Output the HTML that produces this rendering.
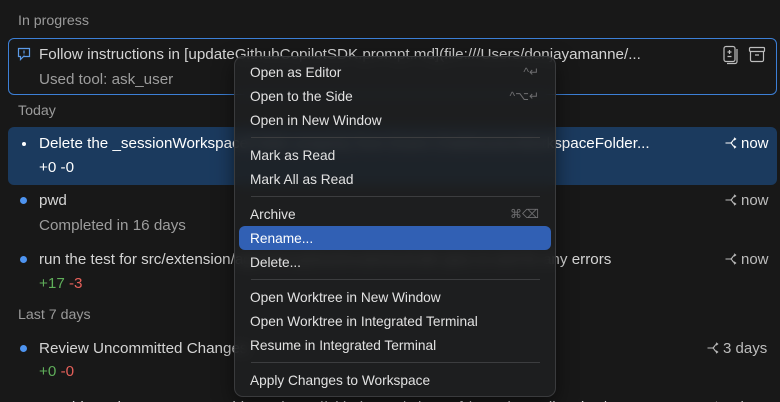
<!DOCTYPE html>
<html><head><meta charset="utf-8"><style>
*{margin:0;padding:0;box-sizing:border-box}
html,body{width:780px;height:402px;overflow:hidden}
body{background:#181818;font-family:"Liberation Sans",sans-serif;font-size:15.2px;color:#cccccc;position:relative}
.a{position:absolute;white-space:nowrap}
.h{color:#9a9a9a;font-size:14.2px}
.t{color:#d4d4d4}
.s{color:#9d9d9d}
.dot{position:absolute;width:7px;height:7px;border-radius:50%;background:#4e94f0}
.g{color:#5fae5a}.r{color:#e5605a}
.menu{position:absolute;left:234px;top:56px;width:322px;height:341px;background:rgba(30,31,33,0.86);backdrop-filter:blur(6px);-webkit-backdrop-filter:blur(6px);border:1px solid #3a3b3d;border-radius:9px;box-shadow:0 6px 20px rgba(0,0,0,.5)}
.mi{position:absolute;left:15px;font-size:13.7px;color:#e2e2e2}
.sep{position:absolute;left:16px;width:289px;height:1px;background:#3c3d3f}
.kb{position:absolute;right:16px;font-size:12px;color:#6e6e70}
.tm{position:absolute;color:#bdbdbd;font-size:15px}
.tm svg{vertical-align:-1px;margin-right:4px}
</style></head><body>
<div class="a h" style="left:18px;top:13px">In progress</div>
<div class="a" style="left:8px;top:38px;width:769px;height:57px;border:1px solid #3c7fd6;border-radius:6px"></div>
<svg class="a" style="left:17px;top:47px" width="14" height="14" viewBox="0 0 14 14" fill="none" stroke="#5c9be8" stroke-width="1.2"><path d="M1.5 1.5h11v8h-6l-3 3v-3h-2z"/><path d="M7 3.5v3M7 7.8v.6"/></svg>
<div class="a t" style="left:39px;top:46px">Follow instructions in [updateGithubCopilotSDK.prompt.md](file:///Users/donjayamanne/...</div>
<div class="a s" style="left:39px;top:71px">Used tool: ask_user</div>
<svg class="a" style="left:722px;top:45px" width="18" height="20" viewBox="0 0 18 20" fill="none" stroke="#bdbdbd" stroke-width="1.2"><rect x="2" y="1.5" width="11" height="15" rx="2"/><path d="M15 4v12.5a2 2 0 0 1-2 2H5"/><path d="M7.5 5v4M5.5 7h4M5.5 11.5h4"/></svg>
<svg class="a" style="left:748px;top:46px" width="18" height="17" viewBox="0 0 18 17" fill="none" stroke="#bdbdbd" stroke-width="1.2"><rect x="1.5" y="1.5" width="15" height="4" rx="1"/><path d="M2.5 5.5v8.5a1.5 1.5 0 0 0 1.5 1.5h10a1.5 1.5 0 0 0 1.5-1.5V5.5M7 9h4"/></svg>

<div class="a h" style="left:18px;top:103px">Today</div>
<div class="a" style="left:8px;top:127px;width:769px;height:58px;background:#1b3a5e;border-radius:6px"></div>
<div class="dot" style="left:22px;top:142px;width:4px;height:4px;background:#fff"></div>
<div class="a" style="left:39px;top:135px;color:#fff">Delete the _sessionWorkspaceFolder property from Event ChatSessionWorkspaceFolder...</div>
<div class="a" style="left:39px;top:159px;color:#fff">+0 -0</div>

<div class="dot" style="left:20px;top:197px"></div>
<div class="a t" style="left:39px;top:192px">pwd</div>
<div class="a s" style="left:39px;top:217px">Completed in 16 days</div>

<div class="dot" style="left:20px;top:256px"></div>
<div class="a t" style="left:39px;top:251px">run the test for src/extension/agents/copilotcli/node/test/sdk.spec.ts and fix any errors</div>
<div class="a" style="left:39px;top:275px"><span class="g">+17</span> <span class="r">-3</span></div>

<div class="a h" style="left:18px;top:307px">Last 7 days</div>
<div class="dot" style="left:20px;top:345px"></div>
<div class="a t" style="left:39px;top:340px">Review Uncommitted Changes</div>
<div class="a" style="left:39px;top:363px"><span class="g">+0</span> <span class="r">-0</span></div>
<div class="a t" style="left:39px;top:399px">test this and ensure we can this PR https://github.com/microsoft/vscode-copilot-chat/pu...</div>

<svg width="0" height="0" style="position:absolute"><defs><symbol id="br" viewBox="0 0 12 12"><path d="M0.5 6h5M5.5 6c2 0 2-4 5-4M5.5 6c2 0 2 4 5 4M9 0.8l1.6 1.2-1.6 1.2M9 8.8l1.6 1.2-1.6 1.2" fill="none" stroke="currentColor" stroke-width="1.1"/></symbol></defs></svg>
<div class="tm" style="left:725px;top:135px;color:#fff"><svg width="12" height="12"><use href="#br"/></svg>now</div>
<div class="tm" style="left:725px;top:192px"><svg width="12" height="12"><use href="#br"/></svg>now</div>
<div class="tm" style="left:725px;top:251px"><svg width="12" height="12"><use href="#br"/></svg>now</div>
<div class="tm" style="left:707px;top:340px"><svg width="12" height="12"><use href="#br"/></svg>3 days</div>
<div class="tm" style="left:707px;top:399px"><svg width="12" height="12"><use href="#br"/></svg>3 days</div>

<div class="menu">
<div class="mi" style="top:8px">Open as Editor</div><div class="kb" style="top:8px">^↵</div>
<div class="mi" style="top:32px">Open to the Side</div><div class="kb" style="top:32px">^⌥↵</div>
<div class="mi" style="top:56px">Open in New Window</div>
<div class="sep" style="top:80px"></div>
<div class="mi" style="top:91px">Mark as Read</div>
<div class="mi" style="top:115px">Mark All as Read</div>
<div class="sep" style="top:139px"></div>
<div class="mi" style="top:150px">Archive</div><div class="kb" style="top:150px">⌘⌫</div>
<div style="position:absolute;left:4px;top:169px;width:312px;height:24px;background:#3160b4;border-radius:6px"></div>
<div class="mi" style="top:174px;color:#fff">Rename...</div>
<div class="mi" style="top:198px">Delete...</div>
<div class="sep" style="top:222px"></div>
<div class="mi" style="top:233px">Open Worktree in New Window</div>
<div class="mi" style="top:257px">Open Worktree in Integrated Terminal</div>
<div class="mi" style="top:281px">Resume in Integrated Terminal</div>
<div class="sep" style="top:305px"></div>
<div class="mi" style="top:316px">Apply Changes to Workspace</div>
</div>
</body></html>
